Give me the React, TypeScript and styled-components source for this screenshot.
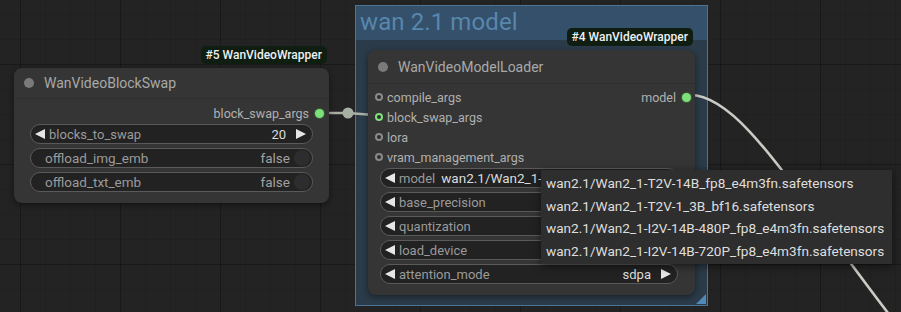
import React from "react";
import styled, { createGlobalStyle } from "styled-components";

const Global = createGlobalStyle`
  html, body { margin: 0; padding: 0; background: #212121; }
  body { font-family: Roboto, "Liberation Sans", Arial, sans-serif; }
`;

const Canvas = styled.div`
  position: relative;
  width: 901px;
  height: 312px;
  overflow: hidden;
  background-color: #232323;
  background-image:
    linear-gradient(to right, rgba(0,0,0,0.22) 1px, transparent 1px),
    linear-gradient(to bottom, rgba(0,0,0,0.22) 1px, transparent 1px),
    linear-gradient(to right, rgba(0,0,0,0.08) 1px, transparent 1px),
    linear-gradient(to bottom, rgba(0,0,0,0.08) 1px, transparent 1px);
  background-size: 100px 100px, 100px 100px, 25px 25px, 25px 25px;
  background-position: 20px 64px, 20px 64px, 20px 64px, 20px 64px;
  font-family: Roboto, "Liberation Sans", Arial, sans-serif;
`;

const Wires = styled.svg`
  position: absolute;
  left: 0;
  top: 0;
  pointer-events: none;
`;

const Group = styled.div<{ $x: number; $y: number; $w: number; $h: number }>`
  position: absolute;
  left: ${(p) => p.$x}px;
  top: ${(p) => p.$y}px;
  width: ${(p) => p.$w}px;
  height: ${(p) => p.$h}px;
  box-sizing: border-box;
  border: 1px solid #4b7393;
  background: #2b3b49;
  display: flex;
  flex-direction: column;
`;

const GroupTitle = styled.div`
  height: 34px;
  background: #34506a;
  color: #5887ae;
  font-size: 24px;
  line-height: 32px;
  padding-left: 4px;
  letter-spacing: 0.1px;
`;

const ResizeHandle = styled.div`
  position: absolute;
  right: 1px;
  bottom: 1px;
  width: 0;
  height: 0;
  border-left: 10px solid transparent;
  border-bottom: 10px solid #4f8ab8;
`;

const Node = styled.div<{ $x: number; $y: number; $w: number; $h: number }>`
  position: absolute;
  left: ${(p) => p.$x}px;
  top: ${(p) => p.$y}px;
  width: ${(p) => p.$w}px;
  height: ${(p) => p.$h}px;
  box-sizing: border-box;
  background: #353535;
  border-radius: 8px;
  box-shadow: 0 2px 6px rgba(0, 0, 0, 0.45);
  display: flex;
  flex-direction: column;
`;

const Badge = styled.div`
  position: absolute;
  right: 2px;
  top: -22px;
  height: 18px;
  padding: 0 5px;
  border-radius: 5px;
  background: #0f1e10;
  color: #f0f0f0;
  font-size: 12px;
  font-weight: 500;
  line-height: 18px;
  white-space: nowrap;
`;

const TitleBar = styled.div<{ $h: number }>`
  height: ${(p) => p.$h}px;
  display: flex;
  align-items: center;
  gap: 10px;
  padding-left: 10px;
  border-bottom: 1px solid #2f2f2f;
  color: #a9a9a9;
  font-size: 14px;
  flex-shrink: 0;
`;

const TitleDot = styled.span`
  width: 10px;
  height: 10px;
  border-radius: 50%;
  background: #7a7a7a;
`;

const Body = styled.div<{ $pl: number; $pr: number; $pt: number }>`
  display: flex;
  flex-direction: column;
  padding: ${(p) => p.$pt}px ${(p) => p.$pr}px 0 ${(p) => p.$pl}px;
`;

const SlotRow = styled.div`
  height: 20px;
  display: flex;
  align-items: center;
  justify-content: space-between;
  font-size: 12.5px;
  color: #b0b0b0;
`;

const SlotIn = styled.div`
  display: flex;
  align-items: center;
  gap: 4px;
  margin-left: -5px;
`;

const SlotOut = styled.div`
  display: flex;
  align-items: center;
  gap: 6px;
  margin-left: auto;
`;

const InDot = styled.span<{ $on?: boolean }>`
  width: 4px;
  height: 4px;
  border-radius: 50%;
  border: 2.5px solid ${(p) => (p.$on ? "#7ee07b" : "#8a8a8a")};
  background: #2e2e2e;
`;

const OutDot = styled.span`
  width: 9px;
  height: 9px;
  border-radius: 50%;
  background: #7ee07b;
  box-shadow: 0 0 0 1px #3a5a38;
`;

const Widgets = styled.div`
  display: flex;
  flex-direction: column;
  gap: 4px;
`;

const Widget = styled.div`
  height: 20px;
  box-sizing: border-box;
  border: 1px solid #5a5a5a;
  border-radius: 10px;
  background: #222222;
  display: flex;
  align-items: center;
  padding: 0 6px 0 4px;
  font-size: 13px;
  color: #9a9a9a;
  white-space: nowrap;
  overflow: hidden;
`;

const Arrow = styled.span<{ $dir: "l" | "r" }>`
  width: 0;
  height: 0;
  border-top: 5.5px solid transparent;
  border-bottom: 5.5px solid transparent;
  ${(p) =>
    p.$dir === "l"
      ? "border-right: 10px solid #e6e6e6;"
      : "border-left: 10px solid #e6e6e6;"}
  flex-shrink: 0;
`;

const Label = styled.span<{ $plain?: boolean }>`
  margin-left: ${(p) => (p.$plain ? "10px" : "4px")};
  color: #9a9a9a;
  font-size: ${(p) => (p.$plain ? "13.5px" : "13px")};
`;

const Value = styled.span<{ $left?: boolean }>`
  color: #dcdcdc;
  margin-left: ${(p) => (p.$left ? "6px" : "auto")};
  margin-right: ${(p) => (p.$left ? "0" : "10px")};
  font-size: ${(p) => (p.$left ? "13.5px" : "13px")};
`;

const FalseValue = styled.span`
  margin-left: auto;
  margin-right: 4px;
  color: #a0a0a0;
  font-size: 13.5px;
`;

const Knob = styled.span`
  width: 16px;
  height: 16px;
  border-radius: 50%;
  background: #2d2d2d;
  margin-right: -4px;
  flex-shrink: 0;
`;

const Menu = styled.div`
  position: absolute;
  left: 541px;
  top: 170px;
  width: 351px;
  padding: 2px 0;
  box-sizing: border-box;
  background: #2e2e2e;
  box-shadow: 0 2px 8px rgba(0, 0, 0, 0.55);
  display: flex;
  flex-direction: column;
`;

const MenuItem = styled.div`
  height: 22.5px;
  line-height: 22.5px;
  padding-left: 5px;
  color: #dedede;
  font-size: 13.6px;
  white-space: nowrap;
`;

type W =
  | { kind: "num"; label: string; value: string }
  | { kind: "toggle"; label: string };

const blockWidgets: W[] = [
  { kind: "num", label: "blocks_to_swap", value: "20" },
  { kind: "toggle", label: "offload_img_emb" },
  { kind: "toggle", label: "offload_txt_emb" },
];

const loaderInputs = [
  { name: "compile_args", on: false },
  { name: "block_swap_args", on: true },
  { name: "lora", on: false },
  { name: "vram_management_args", on: false },
];

const loaderWidgets = [
  { label: "model", value: "wan2.1/Wan2_1-T2V-14B_fp8_e4m3fn.safetensors", inline: true },
  { label: "base_precision", value: "" },
  { label: "quantization", value: "" },
  { label: "load_device", value: "" },
  { label: "attention_mode", value: "sdpa" },
];

const menuItems = [
  "wan2.1/Wan2_1-T2V-14B_fp8_e4m3fn.safetensors",
  "wan2.1/Wan2_1-T2V-1_3B_bf16.safetensors",
  "wan2.1/Wan2_1-I2V-14B-480P_fp8_e4m3fn.safetensors",
  "wan2.1/Wan2_1-I2V-14B-720P_fp8_e4m3fn.safetensors",
];

export default function App() {
  return (
    <>
      <Global />
      <Canvas>
        <Group $x={355} $y={5} $w={353} $h={301}>
          <GroupTitle>wan 2.1 model</GroupTitle>
          <ResizeHandle />
        </Group>

        <Wires width={901} height={312}>
          <path
            d="M 690 95 C 742 95, 796 196, 905 335"
            stroke="#c9cbc4"
            strokeWidth={2.6}
            fill="none"
          />
          <path
            d="M 322 113 L 348 113 L 374 115"
            stroke="#a9b0a6"
            strokeWidth={2.6}
            fill="none"
          />
          <circle cx={348} cy={113} r={5.5} fill="#a7b1a3" />
        </Wires>

        <Node $x={14} $y={68} $w={315} $h={135}>
          <Badge>#5 WanVideoWrapper</Badge>
          <TitleBar $h={30}>
            <TitleDot />
            WanVideoBlockSwap
          </TitleBar>
          <Body $pl={16} $pr={16} $pt={4}>
            <SlotRow>
              <SlotOut style={{ marginRight: -11 }}>
                block_swap_args
                <OutDot />
              </SlotOut>
            </SlotRow>
            <Widgets style={{ marginTop: 1 }}>
              {blockWidgets.map((w) =>
                w.kind === "num" ? (
                  <Widget key={w.label}>
                    <Arrow $dir="l" />
                    <Label>{w.label}</Label>
                    <Value>{w.value}</Value>
                    <Arrow $dir="r" />
                  </Widget>
                ) : (
                  <Widget key={w.label}>
                    <Label $plain>{w.label}</Label>
                    <FalseValue>false</FalseValue>
                    <Knob />
                  </Widget>
                )
              )}
            </Widgets>
          </Body>
        </Node>

        <Node $x={368} $y={50} $w={327} $h={245}>
          <Badge>#4 WanVideoWrapper</Badge>
          <TitleBar $h={33}>
            <TitleDot />
            WanVideoModelLoader
          </TitleBar>
          <Body $pl={12} $pr={17} $pt={3}>
            {loaderInputs.map((s, i) => (
              <SlotRow key={s.name}>
                <SlotIn>
                  <InDot $on={s.on} />
                  {s.name}
                </SlotIn>
                {i === 0 && (
                  <SlotOut style={{ marginRight: -13 }}>
                    model
                    <OutDot />
                  </SlotOut>
                )}
              </SlotRow>
            ))}
            <Widgets style={{ marginTop: 1 }}>
              {loaderWidgets.map((w) => (
                <Widget key={w.label}>
                  <Arrow $dir="l" />
                  <Label>{w.label}</Label>
                  {w.inline ? (
                    <Value $left>{w.value}</Value>
                  ) : (
                    <>
                      <Value>{w.value}</Value>
                      <Arrow $dir="r" />
                    </>
                  )}
                </Widget>
              ))}
            </Widgets>
          </Body>
        </Node>

        <Menu>
          {menuItems.map((m) => (
            <MenuItem key={m}>{m}</MenuItem>
          ))}
        </Menu>
      </Canvas>
    </>
  );
}
